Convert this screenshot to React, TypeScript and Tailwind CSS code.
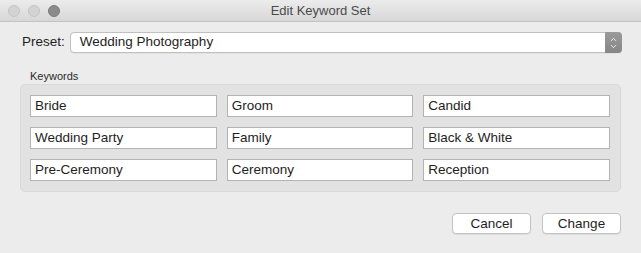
import { ChevronDown, ChevronUp } from 'lucide-react';

const KEYWORDS = [
  'Bride', 'Groom', 'Candid',
  'Wedding Party', 'Family', 'Black & White',
  'Pre-Ceremony', 'Ceremony', 'Reception',
];

function TrafficLight({ dark }: { readonly dark?: boolean }) {
  return (
    <span
      className={
        dark
          ? 'block size-[12px] rounded-full border border-[#7a7a7a] bg-[#8b8b8b]'
          : 'block size-[12px] rounded-full border border-[#c4c4c4] bg-[#d3d3d3]'
      }
    />
  );
}

function TitleBar() {
  return (
    <div className="grid h-[22px] grid-cols-[1fr_auto_1fr] items-center border-b border-[#c2c2c2] bg-gradient-to-b from-[#ececec] to-[#d7d7d7] rounded-t-[5px]">
      <div className="flex items-center gap-[8px] pl-[8px]">
        <TrafficLight />
        <TrafficLight />
        <TrafficLight dark />
      </div>
      <span className="text-[13px] text-[#4a4a4a]">Edit Keyword Set</span>
      <span />
    </div>
  );
}

function PresetSelect() {
  return (
    <div className="mt-[10px] flex items-center pl-[22px] pr-[19px]">
      <span className="mr-[5px] text-[13.5px] text-[#1e1e1e]">Preset:</span>
      <div className="flex h-[21px] flex-1 items-stretch rounded-[4px] border border-[#c0c0c0] bg-white shadow-[0_0.5px_0_rgba(0,0,0,0.08)]">
        <span className="flex flex-1 items-center pl-[9px] text-[13.5px] text-[#1e1e1e]">Wedding Photography</span>
        <span className="-my-px -mr-px flex w-[17px] flex-col items-center justify-center rounded-r-[4px] bg-gradient-to-b from-[#9a9a9a] to-[#868686] text-white">
          <ChevronUp size={9} strokeWidth={2.2} className="-mb-[1px]" />
          <ChevronDown size={9} strokeWidth={2.2} className="-mt-[1px]" />
        </span>
      </div>
    </div>
  );
}

function KeywordField({ value }: { readonly value: string }) {
  return (
    <div className="flex h-[22px] items-center border border-[#b3b3b3] bg-white pl-[4px] text-[13.5px] text-[#1e1e1e]">
      {value}
    </div>
  );
}

export default function App() {
  return (
    <div
      className="flex h-[253px] w-[641px] flex-col bg-[#ececec] antialiased"
      style={{ fontFamily: '"Liberation Sans", Arial, sans-serif' }}
    >
      <TitleBar />
      <PresetSelect />

      <span className="mt-[17px] pl-[30px] text-[11px] leading-[13px] text-[#2a2a2a]">Keywords</span>
      <div className="mx-[20px] mt-px rounded-[5px] border border-[#d8d8d8] bg-[#e2e2e2] p-[10px] pl-[9px]">
        <div className="grid grid-cols-3 gap-[10px]">
          {KEYWORDS.map((k) => <KeywordField key={k} value={k} />)}
        </div>
      </div>

      <div className="mt-[21px] flex justify-end gap-[11px] pr-[20px]">
        <button type="button" className="h-[21px] w-[79px] rounded-[4px] border border-[#c3c3c3] bg-white text-[13.5px] text-[#1e1e1e] shadow-[0_1px_0_rgba(0,0,0,0.06)]">
          Cancel
        </button>
        <button type="button" className="h-[21px] w-[79px] rounded-[4px] border border-[#c3c3c3] bg-white text-[13.5px] text-[#1e1e1e] shadow-[0_1px_0_rgba(0,0,0,0.06)]">
          Change
        </button>
      </div>
    </div>
  );
}
